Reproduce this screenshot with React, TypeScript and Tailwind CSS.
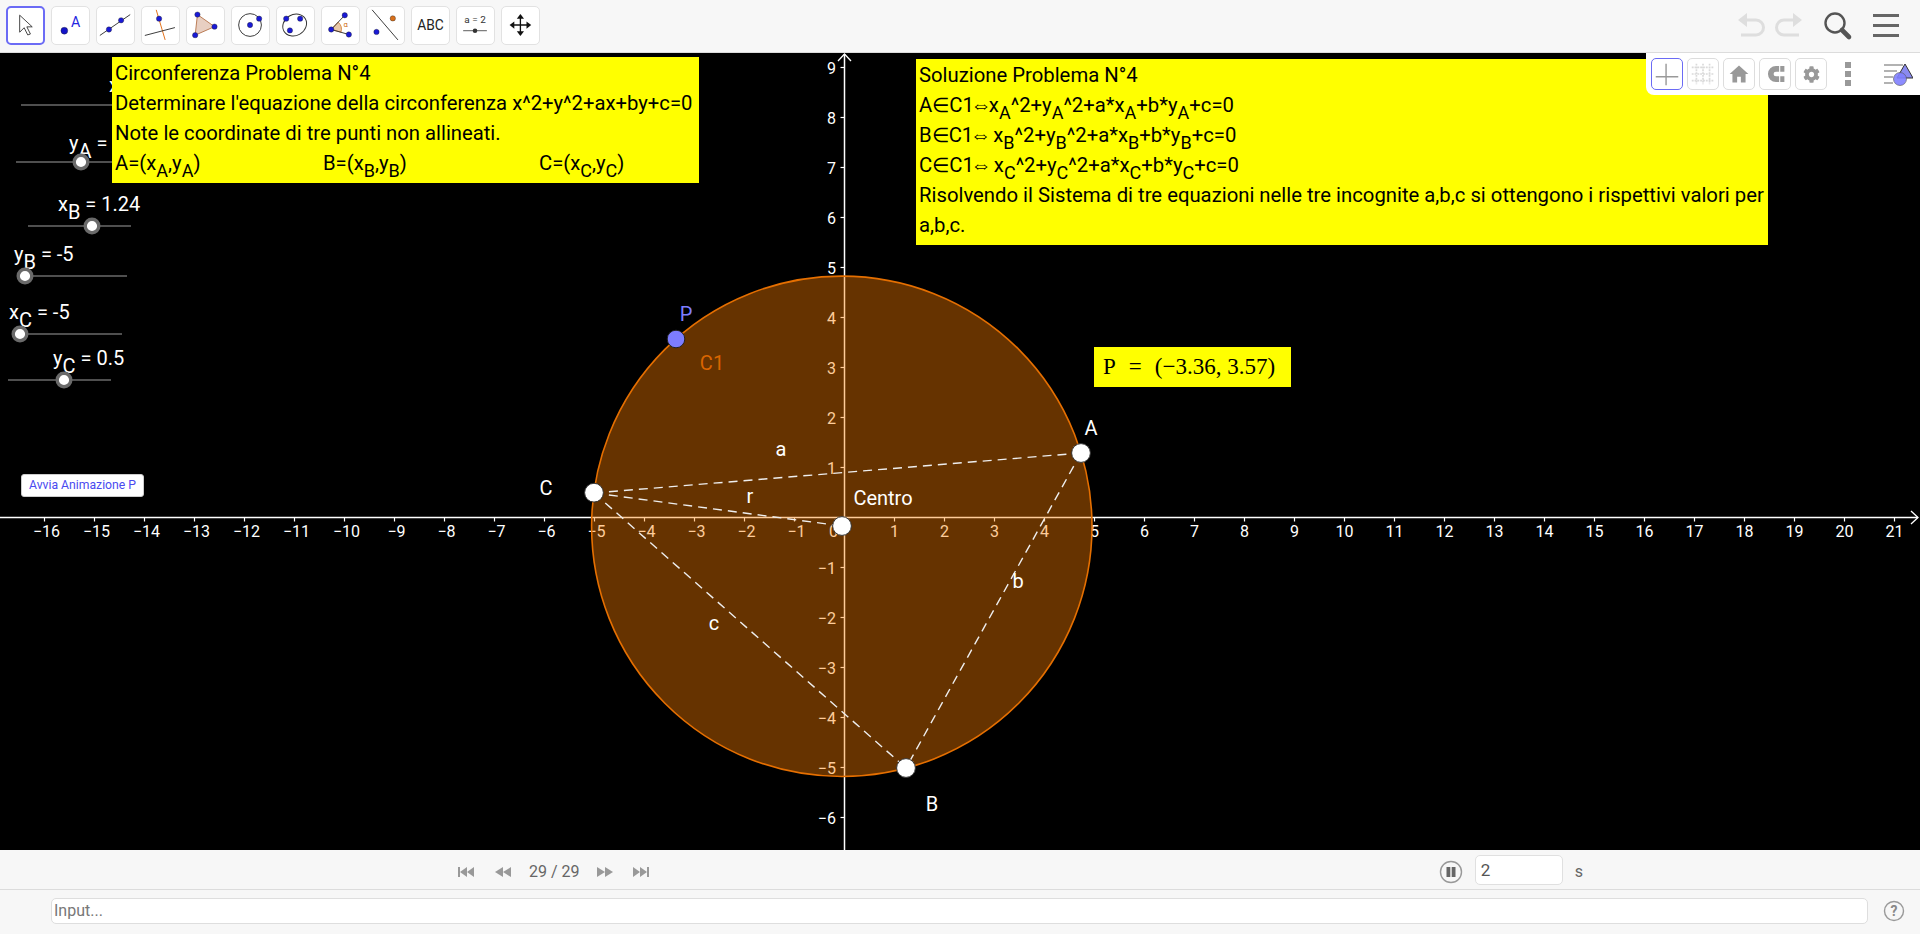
import React from 'react';
import { FaCog } from 'react-icons/fa';

const BLUE = '#1a1ad6';

const Dot = ({ x, y, c = BLUE }: { x: number; y: number; c?: string }) => (
  <circle cx={x} cy={y} r={2.8} fill={c} stroke="#222" strokeWidth={0.4} />
);

const toolIcons: React.ReactNode[] = [
  <path key="move" d="M13 8v19l5-5 4 8 3-1-4-8h6z" fill="#fff" stroke="#333" strokeWidth={1} strokeLinejoin="round" />,
  <g key="point">
    <circle cx={13} cy={25} r={3.6} fill="#1212c8" stroke="#222" strokeWidth={0.4} />
    <text x={25} y={21} fontSize={15} fill="#2525e0" textAnchor="middle">A</text>
  </g>,
  <g key="line">
    <line x1={3} y1={30} x2={35} y2={8} stroke="#333" strokeWidth={1} />
    <Dot x={12.6} y={23.7} />
    <Dot x={25.4} y={14} />
  </g>,
  <g key="perp">
    <line x1={15} y1={3} x2={24.4} y2={34.7} stroke="#e06a10" strokeWidth={1} />
    <line x1={3} y1={30} x2={34.7} y2={21.7} stroke="#333" strokeWidth={1} />
    <Dot x={18} y={12.3} />
  </g>,
  <g key="poly">
    <polygon points="11,8 29,20.7 8.6,29.7" fill="#e8cfc2" stroke="#b87850" strokeWidth={1} />
    <Dot x={11} y={8} />
    <Dot x={29} y={20.7} />
    <Dot x={8.6} y={29.7} />
  </g>,
  <g key="circle">
    <circle cx={19} cy={19} r={12} fill="none" stroke="#333" strokeWidth={1} />
    <Dot x={19} y={19} />
    <Dot x={28.6} y={12.3} />
  </g>,
  <g key="conic">
    <ellipse cx={18.6} cy={19} rx={13} ry={11} fill="none" stroke="#333" strokeWidth={1} transform="rotate(-30 18.6 19)" />
    <Dot x={9.7} y={12.3} />
    <Dot x={24.4} y={12.3} />
    <Dot x={13.6} y={24.7} />
  </g>,
  <g key="angle">
    <path d="M9.7 23.7 L17 16 A10 10 0 0 1 20 26.5 Z" fill="#e8c8a8" stroke="#d07020" strokeWidth={0.8} />
    <line x1={9.7} y1={23.7} x2={24} y2={8.7} stroke="#333" strokeWidth={1} />
    <line x1={9.7} y1={23.7} x2={28.3} y2={29} stroke="#333" strokeWidth={1} />
    <Dot x={9.7} y={23.7} />
    <Dot x={24} y={8.7} />
    <Dot x={28.3} y={29} />
    <text x={25} y={21} fontSize={8} fill="#d07020" textAnchor="middle">α</text>
  </g>,
  <g key="reflect">
    <line x1={5.4} y1={3} x2={32.6} y2={34.7} stroke="#333" strokeWidth={1} />
    <Dot x={27.2} y={12} c="#d9701a" />
    <Dot x={10} y={26.3} />
  </g>,
  <text key="abc" x={19.5} y={24.5} fontSize={14.5} fill="#222" textAnchor="middle">ABC</text>,
  <g key="slider">
    <text x={19} y={17} fontSize={10.5} fill="#333" textAnchor="middle">a = 2</text>
    <line x1={6.5} y1={25} x2={31.5} y2={25} stroke="#555" strokeWidth={1} />
    <circle cx={19} cy={25} r={2.4} fill="#333" />
  </g>,
  <g key="pan" fill="#111">
    <path d="M19.4 10v18M10.5 19h18" stroke="#111" strokeWidth={1.4} />
    <polygon points="19.4,7.5 15.6,12.5 23.2,12.5" />
    <polygon points="19.4,30.5 15.6,25.5 23.2,25.5" />
    <polygon points="8,19 13,15.2 13,22.8" />
    <polygon points="30.8,19 25.8,15.2 25.8,22.8" />
  </g>,
];

const ToolButton = ({ active, children }: { active?: boolean; children: React.ReactNode }) => (
  <button
    className={
      active
        ? 'w-[39px] h-[39px] rounded-[5px] border-2 border-[#6b6bf5] bg-white'
        : 'w-[39px] h-[39px] rounded-[5px] border border-[#e2e2e2] bg-white'
    }
  >
    <svg viewBox="0 0 39 39" className="w-full h-full">{children}</svg>
  </button>
);

const StyleButton = ({ active, children }: { active?: boolean; children: React.ReactNode }) => (
  <div
    className={
      active
        ? 'w-[32px] h-[32px] rounded-[5px] border border-[#6b6bf5] bg-white flex items-center justify-center'
        : 'w-[32px] h-[32px] rounded-[5px] border border-[#dddddd] bg-white flex items-center justify-center'
    }
  >
    {children}
  </div>
);

const Slider = ({ x1, x2, y, k }: { x1: number; x2: number; y: number; k: number }) => (
  <g>
    <line x1={x1} y1={y} x2={x2} y2={y} stroke="#6a6a6a" strokeWidth={1.4} />
    <circle cx={k} cy={y} r={6.8} fill="#fff" stroke="#6a6a6a" strokeWidth={3.4} />
  </g>
);

const SliderLabel = ({ x, y, v, s, val }: { x: number; y: number; v: string; s: string; val: string }) => (
  <text x={x} y={y} fontSize={20} fill="#fff">
    {v}
    <tspan dy={8}>{s}</tspan>
    <tspan dy={-8}>{val}</tspan>
  </text>
);

const Sub = ({ children }: { children: React.ReactNode }) => (
  <span className="text-[18px] align-[-7px] leading-none">{children}</span>
);

const Iff = () => <span className="inline-flex w-[15px] justify-center text-[21px] leading-none">⇔</span>;

const Line = ({ children }: { children: React.ReactNode }) => <div className="h-[30px]">{children}</div>;

const Canvas = () => {
  const ox = 844.5;
  const oy = 517.5;
  const xs: number[] = [];
  for (let i = -16; i <= 21; i++) if (i !== 0) xs.push(i);
  const ys: number[] = [];
  for (let i = -6; i <= 9; i++) if (i !== 0) ys.push(i);

  return (
    <svg viewBox="0 53 1920 797" className="absolute inset-0 w-[1920px] h-[797px]">
      {/* axes */}
      <line x1={0} y1={oy} x2={1918} y2={oy} stroke="#fff" strokeWidth={1.5} />
      <line x1={ox} y1={54} x2={ox} y2={850} stroke="#fff" strokeWidth={1.5} />
      <path d="M1911 511l7 6.5-7 6.5" fill="none" stroke="#fff" strokeWidth={1.3} />
      <path d="M838 61l6.5-7 6.5 7" fill="none" stroke="#fff" strokeWidth={1.3} />
      {xs.map((i) => (
        <g key={i}>
          <line x1={ox + i * 50} y1={oy} x2={ox + i * 50} y2={oy + 4} stroke="#fff" strokeWidth={1.2} />
          <text x={ox + i * 50 + (i < 0 ? 2 : 0)} y={537} fontSize={16} fill="#fff" textAnchor="middle">
            {i < 0 ? `−${-i}` : i}
          </text>
        </g>
      ))}
      <text x={838} y={537} fontSize={16} fill="#fff" textAnchor="end">0</text>
      {ys.map((i) => (
        <g key={i}>
          <line x1={ox - 4} y1={oy - i * 50} x2={ox} y2={oy - i * 50} stroke="#fff" strokeWidth={1.2} />
          <text x={836} y={oy - i * 50 + 6} fontSize={16} fill="#fff" textAnchor="end">
            {i < 0 ? `−${-i}` : i}
          </text>
        </g>
      ))}

      {/* circle */}
      <circle cx={841.8} cy={526.3} r={250.2} fill="#ff8000" fillOpacity={0.4} stroke="#e56f00" strokeWidth={1.6} />

      {/* segments */}
      <g stroke="#eeeeee" strokeWidth={1.4} strokeDasharray="9 6" fill="none">
        <line x1={594} y1={493} x2={1081} y2={453} />
        <line x1={594} y1={493} x2={842} y2={526} />
        <line x1={594} y1={493} x2={906} y2={768} />
        <line x1={1081} y1={453} x2={906} y2={768} />
      </g>

      {/* points */}
      <circle cx={676} cy={339} r={8.8} fill="#7d7dff" stroke="#222" strokeWidth={1} />
      <circle cx={1081} cy={453} r={9.4} fill="#fff" stroke="#333" strokeWidth={1} />
      <circle cx={906} cy={768} r={9.4} fill="#fff" stroke="#333" strokeWidth={1} />
      <circle cx={594} cy={492.7} r={9.4} fill="#fff" stroke="#333" strokeWidth={1} />
      <circle cx={842} cy={526} r={9.4} fill="#fff" stroke="#333" strokeWidth={1} />

      {/* object labels */}
      <g fontSize={20} fill="#fff" textAnchor="middle">
        <text x={686} y={321} fill="#7d7dff">P</text>
        <text x={712} y={370} fill="#d96500">C1</text>
        <text x={1091} y={435}>A</text>
        <text x={546} y={495}>C</text>
        <text x={781} y={456}>a</text>
        <text x={750} y={503}>r</text>
        <text x={883} y={505}>Centro</text>
        <text x={1018} y={588}>b</text>
        <text x={714} y={630}>c</text>
        <text x={932} y={811}>B</text>
      </g>

      {/* sliders */}
      <text x={109} y={92} fontSize={20} fill="#fff">x</text>
      <Slider x1={21} x2={125} y={105} k={125} />
      <SliderLabel x={69} y={150} v="y" s="A" val=" = 4" />
      <Slider x1={16} x2={120} y={162} k={81} />
      <SliderLabel x={58} y={211} v="x" s="B" val=" = 1.24" />
      <Slider x1={28} x2={131} y={226} k={92} />
      <SliderLabel x={14} y={261} v="y" s="B" val=" = -5" />
      <Slider x1={25} x2={127} y={276} k={25} />
      <SliderLabel x={9} y={319} v="x" s="C" val=" = -5" />
      <Slider x1={20} x2={122} y={334} k={20} />
      <SliderLabel x={53} y={365} v="y" s="C" val=" = 0.5" />
      <Slider x1={8} x2={111} y={380} k={64} />
    </svg>
  );
};

const StyleBar = () => (
  <div className="absolute top-0 right-0 w-[274px] h-[42px] bg-white rounded-bl-[8px] flex items-center pl-[5px] gap-[4px]">
    <StyleButton active>
      <svg viewBox="0 0 32 32" className="w-full h-full">
        <path d="M15 5v23M4 19h24" stroke="#999" strokeWidth={1.5} />
      </svg>
    </StyleButton>
    <StyleButton>
      <svg viewBox="0 0 32 32" className="w-full h-full">
        <path d="M9 5v22M16 5v22M23 5v22M4 9h24M4 16h24M4 23h24" stroke="#dadada" strokeWidth={1.8} strokeDasharray="2 1" />
      </svg>
    </StyleButton>
    <StyleButton>
      <svg viewBox="0 0 32 32" className="w-full h-full">
        <polygon points="16,7 26,16 23,16 23,25 18,25 18,19 14,19 14,25 9,25 9,16 6,16" fill="#999" />
      </svg>
    </StyleButton>
    <StyleButton>
      <svg viewBox="0 0 32 32" className="w-full h-full">
        <path d="M26 10.5h-9a5.5 5.5 0 0 0 0 11h9" fill="none" stroke="#999" strokeWidth={6} />
        <path d="M21 7v7M21 18v7" stroke="#fff" strokeWidth={1.2} />
      </svg>
    </StyleButton>
    <StyleButton>
      <FaCog size={17} color="#999" />
    </StyleButton>
    <div className="ml-[14px] flex flex-col gap-[3px]">
      <div className="w-[6px] h-[6px] bg-[#999]" />
      <div className="w-[6px] h-[6px] bg-[#999]" />
      <div className="w-[6px] h-[6px] bg-[#999]" />
    </div>
    <svg viewBox="0 0 30 24" className="w-[30px] h-[24px] ml-[28px]">
      <path d="M1 3h19M1 9h13M1 15h9M1 21h9" stroke="#999" strokeWidth={1.4} />
      <polygon points="22,2 14,16 30,16" fill="#8a8af0" stroke="#333" strokeWidth={1} />
      <circle cx={17} cy={17} r={6.5} fill="#7f7fff" fillOpacity={0.9} stroke="#555" strokeWidth={0.6} />
    </svg>
  </div>
);

const AnimControls = () => (
  <svg viewBox="0 0 192 14" className="w-[192px] h-[14px]">
    <g fill="#999">
      <rect x={0} y={2} width={2} height={10} />
      <polygon points="2,7 9,2 9,12" />
      <polygon points="9,7 16,2 16,12" />
      <polygon points="37,7 45,2 45,12" />
      <polygon points="45,7 53,2 53,12" />
      <polygon points="139,2 147,7 139,12" />
      <polygon points="147,2 155,7 147,12" />
      <polygon points="175,2 182,7 175,12" />
      <polygon points="182,2 189,7 182,12" />
      <rect x={189} y={2} width={2} height={10} />
    </g>
  </svg>
);

export default function App() {
  return (
    <div className="w-[1920px] h-[934px] flex flex-col overflow-hidden bg-[#f7f7f7] font-[Roboto,sans-serif]">
      {/* toolbar */}
      <div className="h-[53px] shrink-0 flex items-center pl-[6px] pb-[1px] gap-[6px] border-b border-[#dcdcdc]">
        {toolIcons.map((icon, i) => (
          <ToolButton key={i} active={i === 0}>
            {icon}
          </ToolButton>
        ))}
        <svg viewBox="0 0 66 30" className="w-[66px] h-[30px] ml-auto">
          <g fill="none" stroke="#dedede" strokeWidth={3}>
            <path d="M6 9h13a7 7 0 0 1 0 15H4" />
            <path d="M60 9H47a7 7 0 0 0 0 15h15" />
          </g>
          <polygon points="1,9 10,2 10,16" fill="#dedede" />
          <polygon points="65,9 56,2 56,16" fill="#dedede" />
        </svg>
        <svg viewBox="0 0 30 30" className="w-[30px] h-[30px] ml-[14px]">
          <circle cx={12} cy={12} r={9.5} fill="none" stroke="#555" strokeWidth={2.4} />
          <line x1={19} y1={19} x2={26} y2={26} stroke="#555" strokeWidth={4.6} strokeLinecap="round" />
        </svg>
        <div className="ml-[14px] mr-[21px] w-[26px] flex flex-col gap-[7px]">
          <div className="h-[3px] bg-[#666]" />
          <div className="h-[3px] bg-[#666]" />
          <div className="h-[3px] bg-[#666]" />
        </div>
      </div>

      {/* graphics view */}
      <div className="relative h-[797px] shrink-0 bg-black overflow-hidden">
        <Canvas />

        <div className="absolute left-[112px] top-[4px] w-[587px] h-[126px] bg-[#ffff00] text-black text-[20.25px] leading-[30px] pl-[3px] pt-[1px] whitespace-nowrap">
          <Line>Circonferenza Problema N°4</Line>
          <Line>Determinare l'equazione della circonferenza x^2+y^2+ax+by+c=0</Line>
          <Line>Note le coordinate di tre punti non allineati.</Line>
          <div className="flex h-[30px]">
            <div className="w-[208px]">A=(x<Sub>A</Sub>,y<Sub>A</Sub>)</div>
            <div className="w-[216px]">B=(x<Sub>B</Sub>,y<Sub>B</Sub>)</div>
            <div>C=(x<Sub>C</Sub>,y<Sub>C</Sub>)</div>
          </div>
        </div>

        <div className="absolute left-[916px] top-[6px] w-[852px] h-[186px] bg-[#ffff00] text-black text-[20.3px] leading-[30px] pl-[3px] pt-[1px] whitespace-nowrap">
          <Line>Soluzione Problema N°4</Line>
          <Line>A∈C1<Iff />x<Sub>A</Sub>^2+y<Sub>A</Sub>^2+a*x<Sub>A</Sub>+b*y<Sub>A</Sub>+c=0</Line>
          <Line>B∈C1<Iff /> x<Sub>B</Sub>^2+y<Sub>B</Sub>^2+a*x<Sub>B</Sub>+b*y<Sub>B</Sub>+c=0</Line>
          <Line>C∈C1<Iff /> x<Sub>C</Sub>^2+y<Sub>C</Sub>^2+a*x<Sub>C</Sub>+b*y<Sub>C</Sub>+c=0</Line>
          <Line>Risolvendo il Sistema di tre equazioni nelle tre incognite a,b,c si ottengono i rispettivi valori per</Line>
          <Line>a,b,c.</Line>
        </div>

        <div className="absolute left-[1094px] top-[294px] w-[197px] h-[40px] bg-[#ffff00] text-black text-[23px] flex items-center pl-[9px] gap-[13px] whitespace-nowrap font-['Liberation_Serif',serif]">
          <span>P</span>
          <span>=</span>
          <span>(−3.36, 3.57)</span>
        </div>

        <button className="absolute left-[21px] top-[421px] w-[123px] h-[23px] bg-white rounded-[3px] border border-[#cccccc] text-[12.2px] leading-none text-[#4a4af0]">
          Avvia Animazione P
        </button>

        <StyleBar />
      </div>

      {/* animation bar */}
      <div className="h-[40px] shrink-0 flex items-center pt-[5px] border-b border-[#dcdcdc] relative">
        <div className="ml-[458px]">
          <AnimControls />
        </div>
        <span className="absolute left-[529px] text-[16px] text-[#666]">29 / 29</span>
        <svg viewBox="0 0 24 24" className="w-[24px] h-[24px] ml-auto">
          <circle cx={12} cy={12} r={10.5} fill="none" stroke="#999" strokeWidth={1.4} />
          <rect x={7.5} y={7} width={3.8} height={10} fill="#666" />
          <rect x={12.7} y={7} width={3.8} height={10} fill="#666" />
        </svg>
        <input
          readOnly
          value="2"
          className="ml-[12px] mb-[4px] w-[88px] h-[30px] rounded-[5px] border border-[#e0e0e0] bg-white px-[5px] text-[17px] text-[#555] outline-none"
        />
        <span className="ml-[12px] mr-[337px] text-[16px] text-[#666]">s</span>
      </div>

      {/* input bar */}
      <div className="h-[44px] shrink-0 flex items-center pl-[51px] pb-[3px]">
        <input
          readOnly
          placeholder="Input..."
          className="w-[1817px] h-[26px] rounded-[5px] border border-[#dedede] bg-white px-[2px] text-[16px] placeholder:text-[#777] outline-none"
        />
        <svg viewBox="0 0 22 22" className="w-[22px] h-[22px] ml-[15px]">
          <circle cx={11} cy={11} r={9.5} fill="none" stroke="#999" strokeWidth={1.4} />
          <text x={11} y={16} fontSize={14} fontWeight={700} fill="#888" textAnchor="middle">?</text>
        </svg>
      </div>
    </div>
  );
}
